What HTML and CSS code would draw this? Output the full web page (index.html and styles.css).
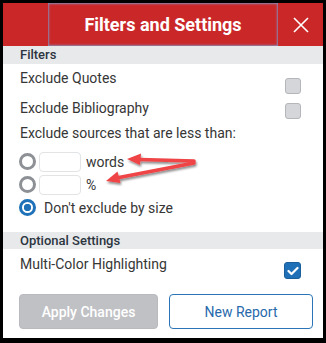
FILE: index.html
```html
<!DOCTYPE html>
<html lang="en">
<head>
    <meta charset="UTF-8">
    <meta name="viewport" content="width=device-width, initial-scale=1.0">
    <title>Filters and Settings</title>
    <link rel="stylesheet" href="styles.css">
</head>
<body>
    <div class="panel">
        <div class="header">
            <div class="header-side"></div>
            <div class="header-title">Filters and Settings</div>
            <div class="header-close">
                <svg width="16" height="16" viewBox="0 0 16 16">
                    <path d="M1 1 L15 15 M15 1 L1 15" stroke="#fff" stroke-width="1.6" fill="none"/>
                </svg>
            </div>
        </div>

        <div class="section-bar">Filters</div>

        <div class="opt-row">
            <span class="opt-label">Exclude Quotes</span>
            <span class="checkbox first"></span>
        </div>
        <div class="opt-row">
            <span class="opt-label">Exclude Bibliography</span>
            <span class="checkbox second"></span>
        </div>
        <div class="sources-label">Exclude sources that are less than:</div>

        <div class="radio-group">
            <div class="radio-row">
                <span class="radio"></span>
                <span class="size-input"></span>
                <span class="radio-text">words</span>
            </div>
            <div class="radio-row">
                <span class="radio"></span>
                <span class="size-input"></span>
                <span class="radio-text">%</span>
            </div>
            <div class="radio-row">
                <span class="radio selected"></span>
                <span class="radio-text wide">Don't exclude by size</span>
            </div>
        </div>

        <div class="section-bar optional">Optional Settings</div>

        <div class="opt-row multi">
            <span class="opt-label">Multi-Color Highlighting</span>
            <span class="checkbox checked">
                <svg width="12" height="10" viewBox="0 0 12 10">
                    <path d="M1.5 5 L4.5 8 L10.5 2" stroke="#fff" stroke-width="2.2" fill="none" stroke-linecap="round" stroke-linejoin="round"/>
                </svg>
            </span>
        </div>

        <div class="button-group">
            <button class="btn apply">Apply Changes</button>
            <button class="btn report">New Report</button>
        </div>

        <svg class="arrows" width="326" height="343" viewBox="0 0 326 343">
            <defs>
                <filter id="shadow" x="-20%" y="-50%" width="140%" height="200%">
                    <feDropShadow dx="1" dy="2" stdDeviation="1.3" flood-color="#000" flood-opacity="0.45"/>
                </filter>
            </defs>
            <g filter="url(#shadow)" fill="#ef4446">
                <path d="M194 161 L140 159.5" stroke="#ef4446" stroke-width="3.5" stroke-linecap="round"/>
                <polygon points="127,159 141,153.5 140,165"/>
                <path d="M194 163 L119 177.5" stroke="#ef4446" stroke-width="3.5" stroke-linecap="round"/>
                <polygon points="106,181 117.5,171.5 120.5,183"/>
            </g>
        </svg>
    </div>
</body>
</html>
```

FILE: styles.css
```css
body {
    margin: 0;
    padding: 0;
    background: #000;
    font-family: Roboto, "Liberation Sans", sans-serif;
    color: #363636;
}

.panel {
    position: relative;
    width: 326px;
    height: 343px;
    box-sizing: border-box;
    border: 3px solid #000;
    border-bottom-width: 5px;
    background: #fff;
}

.header {
    display: flex;
    height: 43px;
    background: #ca2729;
}

.header-side {
    width: 45px;
}

.header-title {
    flex: 1;
    display: flex;
    align-items: center;
    justify-content: center;
    color: #fff;
    font-size: 18px;
    font-weight: 700;
    box-shadow: inset 0 0 2px 1px rgba(130, 150, 200, 0.85);
}

.header-close {
    width: 45px;
    display: flex;
    align-items: center;
    justify-content: center;
}

.section-bar {
    height: 18px;
    line-height: 18px;
    padding-left: 17px;
    background: #e8e9eb;
    color: #2c3540;
    font-size: 13px;
    font-weight: 500;
}

.section-bar.optional {
    margin-top: 13px;
    height: 17px;
    line-height: 17px;
}

.opt-row {
    display: flex;
    justify-content: space-between;
    align-items: flex-start;
    height: 30px;
    padding: 0 22px 0 17px;
}

.opt-label {
    margin-top: 6px;
    font-size: 14px;
    line-height: 16px;
}

.checkbox {
    width: 14px;
    height: 14px;
    border: 1px solid #b4b6ba;
    border-radius: 3px;
    background: #d5d6da;
}

.checkbox.first {
    margin-top: 14px;
}

.checkbox.second {
    margin-top: 9px;
}

.checkbox.checked {
    display: flex;
    align-items: center;
    justify-content: center;
    margin-top: 13px;
    width: 15px;
    height: 15px;
    border: 1px solid #1a5f9c;
    background: #1f70b6;
}

.opt-row.multi {
    height: 45px;
}

.opt-row.multi .opt-label {
    margin-top: 7px;
}

.sources-label {
    padding: 1px 17px 0;
    font-size: 14px;
    line-height: 16px;
}

.radio-group {
    margin-top: 9px;
    padding-left: 16px;
}

.radio-row {
    display: flex;
    align-items: center;
    height: 23px;
}

.radio {
    width: 11px;
    height: 11px;
    border: 3px solid #8d9095;
    border-radius: 50%;
    background: #fff;
}

.radio.selected {
    border-color: #1f72b8;
    background: radial-gradient(circle, #1f72b8 0 3.4px, #fff 4px);
}

.size-input {
    width: 40px;
    height: 18px;
    margin-left: 3px;
    border: 1px solid #e2e3e5;
    border-radius: 4px;
}

.radio-text {
    margin-left: 5px;
    font-size: 14px;
}

.radio-text.wide {
    margin-left: 8px;
}

.button-group {
    display: flex;
    gap: 11px;
    padding: 0 10px 0 16px;
}

.btn {
    height: 35px;
    border-radius: 4px;
    font-family: Roboto, "Liberation Sans", sans-serif;
    font-size: 14px;
    cursor: pointer;
}

.apply {
    width: 139px;
    background: #c0c1c5;
    border: 1px solid #b9babe;
    color: #fff;
    font-weight: 500;
}

.report {
    flex: 1;
    background: #fff;
    border: 1px solid #2b74b7;
    color: #2769ab;
}

.arrows {
    position: absolute;
    left: -3px;
    top: -3px;
    pointer-events: none;
}
```
